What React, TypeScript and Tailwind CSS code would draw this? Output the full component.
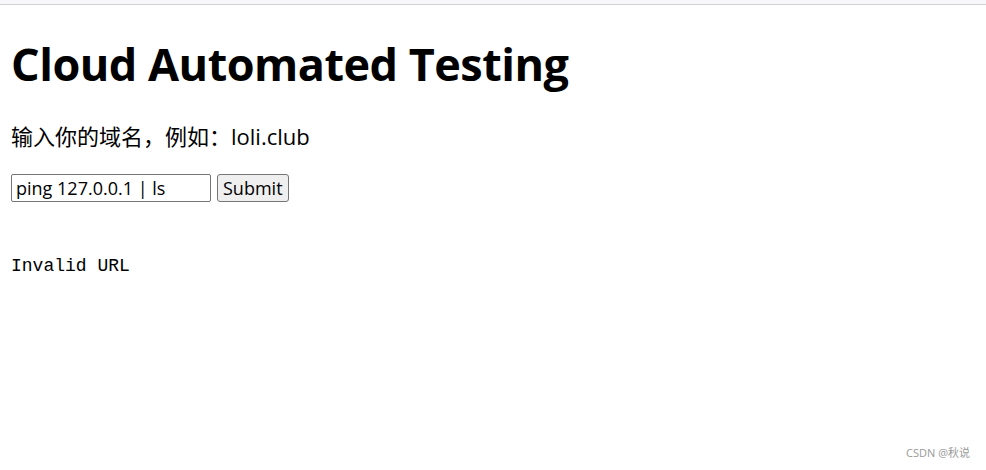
import React from "react";

export default function App() {
  return (
    <div className="relative h-[470px] w-[986px] overflow-hidden bg-white text-black" style={{ fontFamily: '"Open Sans", "Noto Sans CJK SC", sans-serif' }}>
      <div className="h-[5px] bg-[#f7f7f9] border-b border-[#d2d2d2]" />
      <div className="px-[11px]">
        <h1 className="mt-[31px] text-[45px] leading-[56px] font-bold tracking-[-0.5px]">Cloud Automated Testing</h1>
        <p className="mt-[29px] text-[22px] leading-[30px]">输入你的域名，例如：loli.club</p>
        <div className="mt-[23px] flex items-center gap-[6px]">
          <input
            readOnly
            value="ping 127.0.0.1 | ls"
            className="h-[28px] w-[200px] rounded-[2px] border border-[#767676] px-[4px] text-[18px] outline-none"
            style={{ fontFamily: '"Open Sans", sans-serif' }}
          />
          <button className="h-[28px] rounded-[3px] border border-[#767676] bg-[#efefef] px-[5px] text-[18px] leading-none">Submit</button>
        </div>
        <pre className="mt-[53px] text-[18px] leading-[22px]" style={{ fontFamily: '"Liberation Mono", monospace' }}>Invalid URL</pre>
      </div>
      <div className="absolute bottom-[9px] right-[16px] text-[11px] text-[#999]">CSDN @秋说</div>
    </div>
  );
}
